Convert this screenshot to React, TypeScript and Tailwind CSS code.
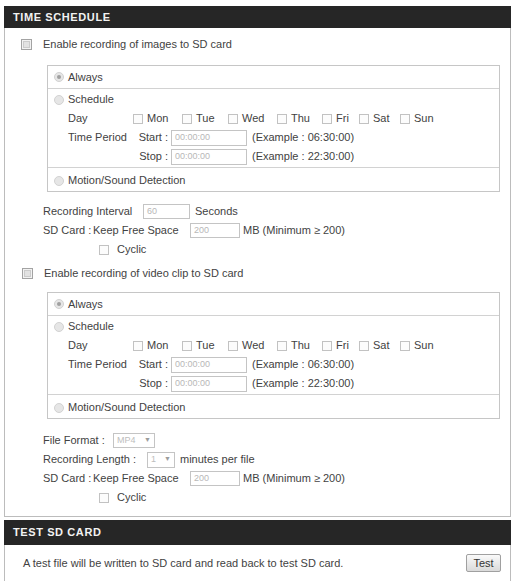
const days = [
  { label: "Mon", width: "w-[49px]" },
  { label: "Tue", width: "w-[46px]" },
  { label: "Wed", width: "w-[49px]" },
  { label: "Thu", width: "w-[45px]" },
  { label: "Fri", width: "w-[37px]" },
  { label: "Sat", width: "w-[41px]" },
  { label: "Sun", width: "w-[40px]" },
]

function BigCheckbox() {
  return (
    <span className="flex h-[11px] w-[11px] items-center justify-center border border-[#a3a3a3] bg-[#f2f2f2]">
      <span className="h-[7px] w-[7px] border border-[#cbcbcb] bg-[#e2e2e2]" />
    </span>
  )
}

function Checkbox() {
  return <span className="h-[10px] w-[10px] shrink-0 border border-[#c2c2c2] bg-[#fcfcfc]" />
}

function Radio({ checked = false }: { checked?: boolean }) {
  return (
    <span className="flex h-[10px] w-[10px] shrink-0 items-center justify-center rounded-full border border-[#d2d2d2] bg-[#e6e6e6]">
      {checked ? <span className="h-[4px] w-[4px] rounded-full bg-[#a0a0a0]" /> : null}
    </span>
  )
}

function TextBox({ value, className }: { value: string; className: string }) {
  return (
    <span
      className={`flex items-center border border-[#c4c4c4] bg-white pl-[3px] text-[9px] text-[#b8b8b8] ${className}`}
    >
      {value}
    </span>
  )
}

function Select({ value, className }: { value: string; className: string }) {
  return (
    <span
      className={`flex items-center justify-between border border-[#c4c4c4] bg-white px-[3px] text-[9px] text-[#bdbdbd] ${className}`}
    >
      <span>{value}</span>
      <span className="text-[7px] text-[#9c9c9c]">▼</span>
    </span>
  )
}

function Row({ className = "", children }: { className?: string; children: React.ReactNode }) {
  return <div className={`flex h-[19px] items-center ${className}`}>{children}</div>
}

function ScheduleBox({ className }: { className: string }) {
  return (
    <div className={`ml-[42px] w-[453px] border border-[#c6c6c6] ${className}`}>
      <div className="flex h-[23px] items-center gap-[4px] border-b border-[#d2d2d2] pl-[6px]">
        <Radio checked />
        <span>Always</span>
      </div>
      <div className="border-b border-[#d2d2d2] py-[1px]">
        <Row className="gap-[4px] pl-[6px]">
          <Radio />
          <span>Schedule</span>
        </Row>
        <Row className="pl-[20px]">
          <span className="w-[65px]">Day</span>
          {days.map((day) => (
            <span key={day.label} className={`flex items-center gap-[4px] ${day.width}`}>
              <Checkbox />
              <span>{day.label}</span>
            </span>
          ))}
        </Row>
        <Row className="pl-[20px]">
          <span className="w-[65px]">Time Period</span>
          <span className="w-[35px] text-right">Start :</span>
          <TextBox value="00:00:00" className="ml-[3px] h-[16px] w-[76px]" />
          <span className="ml-[5px]">(Example : 06:30:00)</span>
        </Row>
        <Row className="pl-[85px]">
          <span className="w-[35px] text-right">Stop :</span>
          <TextBox value="00:00:00" className="ml-[3px] h-[16px] w-[76px]" />
          <span className="ml-[5px]">(Example : 22:30:00)</span>
        </Row>
      </div>
      <div className="flex h-[23px] items-center gap-[4px] pl-[6px] pt-[2px]">
        <Radio />
        <span>Motion/Sound Detection</span>
      </div>
    </div>
  )
}

function FreeSpace() {
  return (
    <>
      <Row className="pl-[38px]">
        <span className="w-[50px]">SD Card :</span>
        <span className="w-[97px]">Keep Free Space</span>
        <TextBox value="200" className="h-[15px] w-[50px]" />
        <span className="ml-[3px]">MB (Minimum ≥ 200)</span>
      </Row>
      <Row className="pl-[94px]">
        <Checkbox />
        <span className="ml-[8px]">Cyclic</span>
      </Row>
    </>
  )
}

export default function App() {
  return (
    <div className="h-[584px] w-[515px] overflow-hidden bg-white pl-[4px] pt-[6px] font-['Liberation_Sans',Arial,sans-serif] text-[11px] text-[#424242]">
      <section className="w-[507px]">
        <div className="flex h-[22px] items-center bg-[#262626] pl-[9px] font-bold tracking-[0.6px] text-[#f2f2f2]">
          TIME SCHEDULE
        </div>
        <div className="border-x border-b border-[#bcbcbc] pb-[9px] pt-[7px]">
          <Row className="gap-[11px] pl-[16px]">
            <BigCheckbox />
            <span>Enable recording of images to SD card</span>
          </Row>
          <ScheduleBox className="mt-[11px]" />
          <Row className="mt-[10px] pl-[38px]">
            <span className="w-[100px]">Recording Interval</span>
            <TextBox value="60" className="h-[15px] w-[47px]" />
            <span className="ml-[5px]">Seconds</span>
          </Row>
          <FreeSpace />
          <Row className="mt-[5px] gap-[11px] pl-[17px]">
            <BigCheckbox />
            <span>Enable recording of video clip to SD card</span>
          </Row>
          <ScheduleBox className="mt-[9px]" />
          <Row className="mt-[12px] pl-[38px]">
            <span className="w-[70px]">File Format :</span>
            <Select value="MP4" className="h-[15px] w-[42px]" />
          </Row>
          <Row className="pl-[38px]">
            <span className="w-[104px]">Recording Length :</span>
            <Select value="1" className="h-[16px] w-[28px]" />
            <span className="ml-[5px]">minutes per file</span>
          </Row>
          <FreeSpace />
        </div>
      </section>

      <section className="mt-[3px] w-[507px]">
        <div className="flex h-[25px] items-center bg-[#262626] pl-[9px] font-bold tracking-[0.6px] text-[#f2f2f2]">
          TEST SD CARD
        </div>
        <div className="flex h-[36px] items-center justify-between border-x border-[#bcbcbc] pl-[18px] pr-[9px]">
          <span>A test file will be written to SD card and read back to test SD card.</span>
          <button className="h-[18px] w-[35px] rounded-[2px] border border-[#a0a0a0] bg-gradient-to-b from-[#fafafa] to-[#dadada] text-[11px] text-[#333]">
            Test
          </button>
        </div>
      </section>
    </div>
  )
}
